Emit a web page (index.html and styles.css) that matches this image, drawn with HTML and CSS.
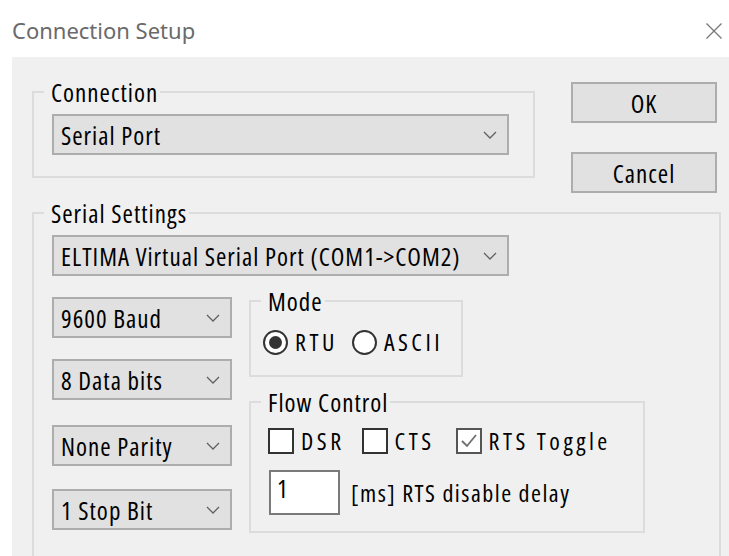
FILE: index.html
```html
<!DOCTYPE html>
<html lang="en">
<head>
<meta charset="utf-8">
<title>Connection Setup</title>
<link rel="stylesheet" href="styles.css">
</head>
<body>
<div class="dialog">
  <header class="titlebar">
    <span class="title">Connection Setup</span>
    <svg class="close" viewBox="0 0 16 16" aria-label="Close"><path d="M0.5 0.5L15.5 15.5M15.5 0.5L0.5 15.5"/></svg>
  </header>

  <main class="panel">
    <div class="top-row">
      <fieldset class="group group-connection">
        <legend>Connection</legend>
        <div class="combo combo-wide">
          <span>Serial Port</span>
          <svg class="chevron" viewBox="0 0 14 8"><path d="M1 1L7 7L13 1"/></svg>
        </div>
      </fieldset>

      <div class="buttons">
        <button class="btn" type="button">OK</button>
        <button class="btn" type="button">Cancel</button>
      </div>
    </div>

    <fieldset class="group group-serial">
      <legend>Serial Settings</legend>
      <div class="combo combo-wide">
        <span>ELTIMA Virtual Serial Port (COM1-&gt;COM2)</span>
        <svg class="chevron" viewBox="0 0 14 8"><path d="M1 1L7 7L13 1"/></svg>
      </div>

      <div class="serial-row">
        <div class="combo-col">
          <div class="combo combo-small">
            <span>9600 Baud</span>
            <svg class="chevron" viewBox="0 0 14 8"><path d="M1 1L7 7L13 1"/></svg>
          </div>
          <div class="combo combo-small">
            <span>8 Data bits</span>
            <svg class="chevron" viewBox="0 0 14 8"><path d="M1 1L7 7L13 1"/></svg>
          </div>
          <div class="combo combo-small">
            <span>None Parity</span>
            <svg class="chevron" viewBox="0 0 14 8"><path d="M1 1L7 7L13 1"/></svg>
          </div>
          <div class="combo combo-small">
            <span>1 Stop Bit</span>
            <svg class="chevron" viewBox="0 0 14 8"><path d="M1 1L7 7L13 1"/></svg>
          </div>
        </div>

        <div class="side-col">
          <fieldset class="group group-mode">
            <legend>Mode</legend>
            <div class="radios">
              <label class="radio is-checked"><span class="dot"></span><span class="opt">RTU</span></label>
              <label class="radio"><span class="dot"></span><span class="opt">ASCII</span></label>
            </div>
          </fieldset>

          <fieldset class="group group-flow">
            <legend>Flow Control</legend>
            <div class="checks">
              <label class="check"><span class="box"></span><span class="opt">DSR</span></label>
              <label class="check check-cts"><span class="box"></span><span class="opt">CTS</span></label>
              <label class="check check-rts"><span class="box"><svg viewBox="0 0 22 22"><path d="M4 11L9 16L18 5"/></svg></span><span class="opt">RTS Toggle</span></label>
            </div>
            <div class="delay">
              <span class="edit">1</span>
              <span class="opt delay-label">[ms] RTS disable delay</span>
            </div>
          </fieldset>
        </div>
      </div>
    </fieldset>
  </main>
</div>
</body>
</html>
```

FILE: styles.css
```css
* {
  box-sizing: border-box;
}

html,
body {
  margin: 0;
}

body {
  width: 729px;
  height: 556px;
  overflow: hidden;
  background: #ffffff;
  font-family: "Open Sans", "Liberation Sans", Arial, sans-serif;
  font-stretch: 75%;
  font-size: 25px;
  letter-spacing: 1px;
  color: #000000;
}

/* Window caption */
.titlebar {
  height: 57px;
  display: flex;
  justify-content: space-between;
  align-items: flex-start;
  padding: 16px 7px 0 12px;
}

.title {
  font-family: "Noto Sans", "Open Sans", sans-serif;
  font-stretch: 100%;
  font-size: 22px;
  line-height: 28px;
  letter-spacing: 0;
  color: #6a6a6a;
}

.close {
  width: 16px;
  height: 16px;
  margin-top: 7px;
  fill: none;
  stroke: #777777;
  stroke-width: 1.3;
}

/* Dialog client area */
.panel {
  margin-left: 12px;
  height: 499px;
  background: #f0f0f0;
  padding-left: 20px;
  overflow: hidden;
}

.top-row {
  display: flex;
  align-items: flex-start;
}

/* Group boxes */
.group {
  margin: 0;
  min-width: 0;
  border: 2px solid #dcdcdc;
  padding: 0 0 0 10px;
}

.group > legend {
  padding: 0 2px 0 7px;
  font-size: 25px;
  line-height: 28px;
  height: 28px;
}

.group-connection {
  width: 503px;
  margin-top: 21px;
  padding-top: 8px;
  padding-bottom: 21px;
}

.group-serial {
  width: 689px;
  margin-top: 6px;
  padding-top: 8px;
  padding-bottom: 60px;
}

.group-mode {
  width: 214px;
  padding-top: 14px;
  padding-bottom: 20px;
}

.group-flow {
  width: 396px;
  padding-top: 12px;
  padding-bottom: 16px;
}

/* Push buttons */
.buttons {
  display: flex;
  flex-direction: column;
  gap: 29px;
  margin: 25px 0 0 36px;
}

.btn {
  width: 146px;
  height: 41px;
  padding: 0;
  border: 2px solid #adadad;
  background: #e1e1e1;
  font: inherit;
  font-stretch: 75%;
  letter-spacing: 1px;
  color: #000000;
}

/* Drop-down lists */
.combo {
  display: flex;
  align-items: center;
  justify-content: space-between;
  height: 41px;
  border: 2px solid #adadad;
  background: #e1e1e1;
  padding: 0 10px 0 7px;
  white-space: nowrap;
}

.combo-wide {
  width: 457px;
  margin-left: 8px;
}

.combo-small {
  width: 180px;
}

.chevron {
  width: 14px;
  height: 8px;
  flex: none;
  fill: none;
  stroke: #606060;
  stroke-width: 1.3;
}

.serial-row {
  display: flex;
  align-items: flex-start;
  margin: 11px 0 0 8px;
}

.combo-col {
  display: flex;
  flex-direction: column;
  margin-top: 10px;
}

.combo-col .combo:nth-child(2) {
  margin-top: 21px;
}

.combo-col .combo:nth-child(3) {
  margin-top: 25px;
}

.combo-col .combo:nth-child(4) {
  margin-top: 23px;
}

.side-col {
  display: flex;
  flex-direction: column;
  gap: 11px;
  margin-left: 17px;
}

/* Option labels */
.opt {
  font-size: 24px;
  line-height: 26px;
  letter-spacing: 3.5px;
  white-space: nowrap;
}

.delay-label {
  letter-spacing: 1.5px;
}

/* Radio buttons */
.radios {
  display: flex;
  align-items: center;
  gap: 14px;
  margin-left: 2px;
}

.radio {
  display: flex;
  align-items: center;
  gap: 7px;
}

.dot {
  display: grid;
  place-items: center;
  width: 25px;
  height: 25px;
  border: 2px solid #333333;
  border-radius: 50%;
  background: #ffffff;
}

.is-checked .dot::after {
  content: "";
  width: 13px;
  height: 13px;
  border-radius: 50%;
  background: #333333;
}

/* Check boxes */
.checks {
  display: flex;
  align-items: center;
  margin-left: 7px;
}

.check {
  display: flex;
  align-items: center;
  gap: 7px;
}

.check-cts {
  margin-left: 17px;
}

.check-rts {
  margin-left: 21px;
}

.box {
  display: grid;
  place-items: center;
  width: 26px;
  height: 26px;
  border: 2px solid #333333;
  background: #ffffff;
}

.check-rts .box {
  border-color: #555555;
}

.box svg {
  width: 22px;
  height: 22px;
  fill: none;
  stroke: #6e6e6e;
  stroke-width: 1.8;
}

/* Delay edit field */
.delay {
  display: flex;
  align-items: center;
  gap: 11px;
  margin: 16px 0 0 8px;
}

.edit {
  display: block;
  width: 71px;
  height: 45px;
  padding: 2px 6px;
  border: 2px solid #7a7a7a;
  background: #ffffff;
  font-size: 25px;
  line-height: 28px;
  letter-spacing: 0;
}
```
